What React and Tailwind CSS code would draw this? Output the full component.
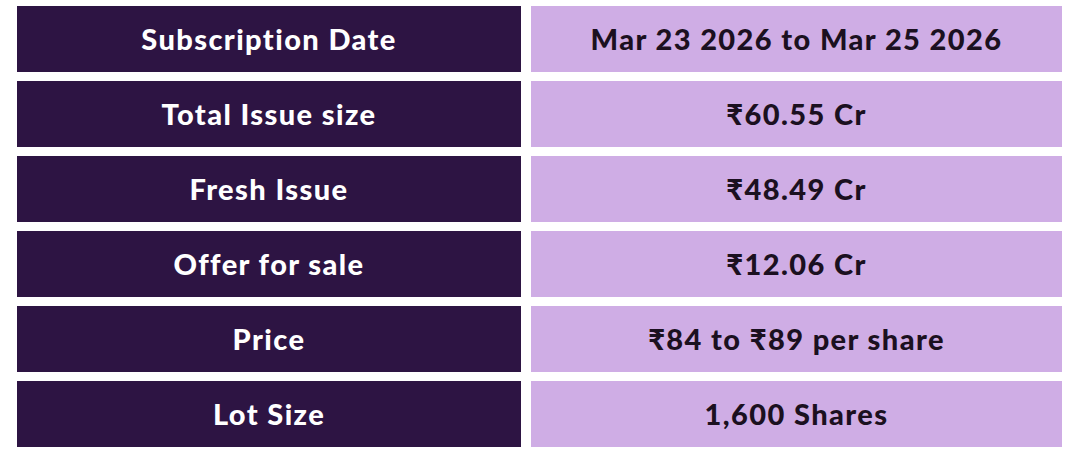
import React from 'react';

const rows = [
    ['Subscription Date', 'Mar 23 2026 to Mar 25 2026'],
    ['Total Issue size', '₹60.55 Cr'],
    ['Fresh Issue', '₹48.49 Cr'],
    ['Offer for sale', '₹12.06 Cr'],
    ['Price', '₹84 to ₹89 per share'],
    ['Lot Size', '1,600 Shares'],
];

const App = () => {
    return (
        <div className="w-[1080px] h-[455px] bg-white pl-[17px] pr-[18px] pt-[6px] font-['Lato','Noto_Sans',sans-serif] font-black text-[29px] tracking-[1.4px]">
            <div className="grid grid-cols-[504px_1fr] gap-x-[10px] gap-y-[9px]">
                {rows.map(([label, value]) => (
                    <React.Fragment key={label}>
                        <div className="h-[66px] bg-[#2d1443] text-white flex items-center justify-center">
                            {label}
                        </div>
                        <div className="h-[66px] bg-[#cfade5] text-[#1b1020] flex items-center justify-center">
                            {value}
                        </div>
                    </React.Fragment>
                ))}
            </div>
        </div>
    );
};

export default App;
